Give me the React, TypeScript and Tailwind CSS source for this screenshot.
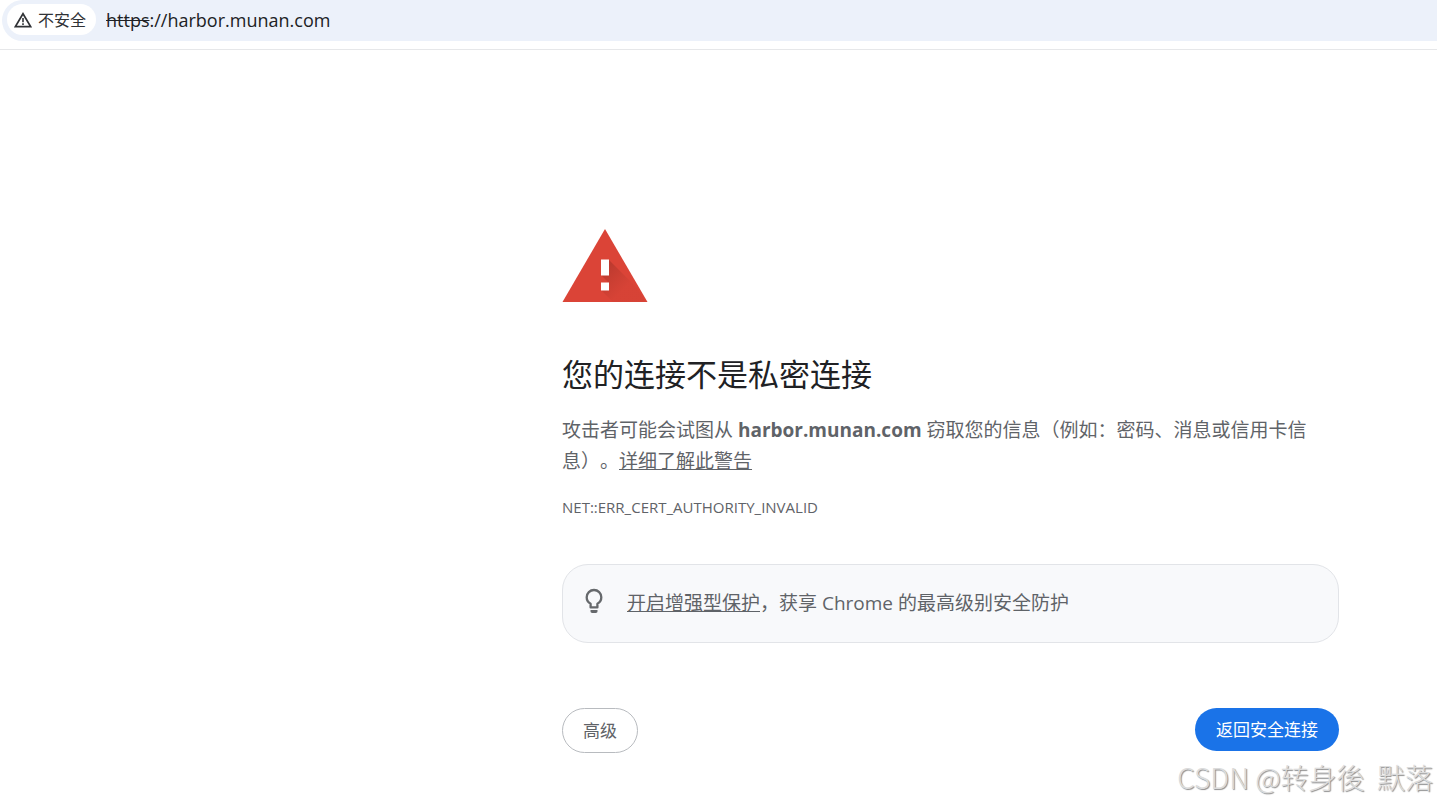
const harborHost = 'harbor.munan.com'

function WarningOutline() {
  return (
    <svg viewBox="0 0 18 16" className="h-4 w-[18px] shrink-0" fill="none" aria-hidden="true">
      <path d="M9 1.7 16.6 14.6H1.4Z" stroke="#303236" strokeWidth="1.7" />
      <path d="M9 6v4.2M9 11.2v1.7" stroke="#303236" strokeWidth="1.6" />
    </svg>
  )
}

function DangerTriangle() {
  return (
    <svg viewBox="0 0 86 74" className="h-[74px] w-[86px]" role="img" aria-label="警告">
      <defs>
        <linearGradient id="shade" gradientUnits="userSpaceOnUse" x1="40" y1="38" x2="62" y2="60">
          <stop offset="0" stopColor="#b0362b" stopOpacity="0.8" />
          <stop offset="1" stopColor="#b83a2e" stopOpacity="0.12" />
        </linearGradient>
      </defs>
      <path d="M43 0 85.5 73H.5Z" fill="#db4437" />
      <path d="M47 31 75.5 59.5 83.7 73H51L39 61 47 54 39 46Z" fill="url(#shade)" />
      <path d="M39 30.5h8v16h-8zM39 53.5h8v8h-8z" fill="#fff" />
    </svg>
  )
}

function Bulb() {
  return (
    <svg viewBox="0 0 18 26" className="h-[26px] w-[18px] shrink-0" fill="none" aria-hidden="true">
      <path
        d="M5.6 19.4v-3.6C3.3 14.5 1.7 12.3 1.7 9.3a7.3 7.3 0 0 1 14.6 0c0 3-1.6 5.2-3.9 6.5v3.6Z"
        stroke="#66696c"
        strokeWidth="2.3"
        strokeLinejoin="round"
      />
      <path d="M5.5 22h7v1.2c0 1-.7 1.7-1.6 1.7H7.1c-.9 0-1.6-.7-1.6-1.7Z" fill="#66696c" />
    </svg>
  )
}

export default function App() {
  return (
    <div className="relative min-h-screen bg-white font-['Open_Sans','Noto_Sans_CJK_SC',sans-serif] text-[#5f6368]">
      <header className="border-b border-[#e6e7e9] pb-2 pl-0.5">
        <div className="flex h-[41px] items-center rounded-l-full bg-[#ecf1fa] pb-0.5 pl-[5px]">
          <button
            type="button"
            className="flex h-[31px] items-center gap-1.5 rounded-full bg-white pr-2.5 pl-[7px] text-base leading-none text-[#303236]"
          >
            <WarningOutline />
            不安全
          </button>
          <a href="#" className="ml-2.5 text-lg leading-6 text-[#202124]">
            <span className="line-through">https</span>://{harborHost}
          </a>
        </div>
      </header>

      <main className="flex justify-end pt-[179px] pr-[98px] pb-[52px] pl-8">
        <div className="w-full max-w-[777px]">
          <DangerTriangle />
          <h1 className="mt-[51px] text-[31px] leading-10 text-[#202124]">您的连接不是私密连接</h1>
          <p className="mt-[21px] max-w-[750px] text-[19px] leading-[31px] [text-spacing-trim:space-all]">
            攻击者可能会试图从 <strong>{harborHost}</strong> 窃取您的信息（例如：密码、消息或信用卡信息）。
            <a href="#" className="underline">详细了解此警告</a>
          </p>
          <p className="mt-[18px] text-[15px] leading-6">NET::ERR_CERT_AUTHORITY_INVALID</p>

          <div className="mt-[45px] flex items-start gap-6 rounded-[26px] border border-[#e2e4e8] bg-[#f8f9fb] px-[22px] py-[23px]">
            <Bulb />
            <p className="text-[19px] leading-[31px]">
              <a href="#" className="underline">开启增强型保护</a>，获享 Chrome 的最高级别安全防护
            </p>
          </div>

          <div className="mt-[65px] flex items-start justify-between">
            <button
              type="button"
              className="h-[45px] rounded-full border border-[#b8bbbf] px-5 text-[17px] leading-6"
            >
              高级
            </button>
            <button
              type="button"
              className="h-[43px] rounded-full bg-[#1a73e8] px-[21px] text-[17px] leading-6 text-white"
            >
              返回安全连接
            </button>
          </div>
        </div>
      </main>

      <div className="absolute right-1 bottom-2 font-['Noto_Sans_CJK_SC',sans-serif] text-[28px] leading-10 font-light whitespace-pre text-[#dcdcdc] [text-shadow:1px_1px_1px_#8c8c8c]">
        CSDN @转身後  默落
      </div>
    </div>
  )
}
